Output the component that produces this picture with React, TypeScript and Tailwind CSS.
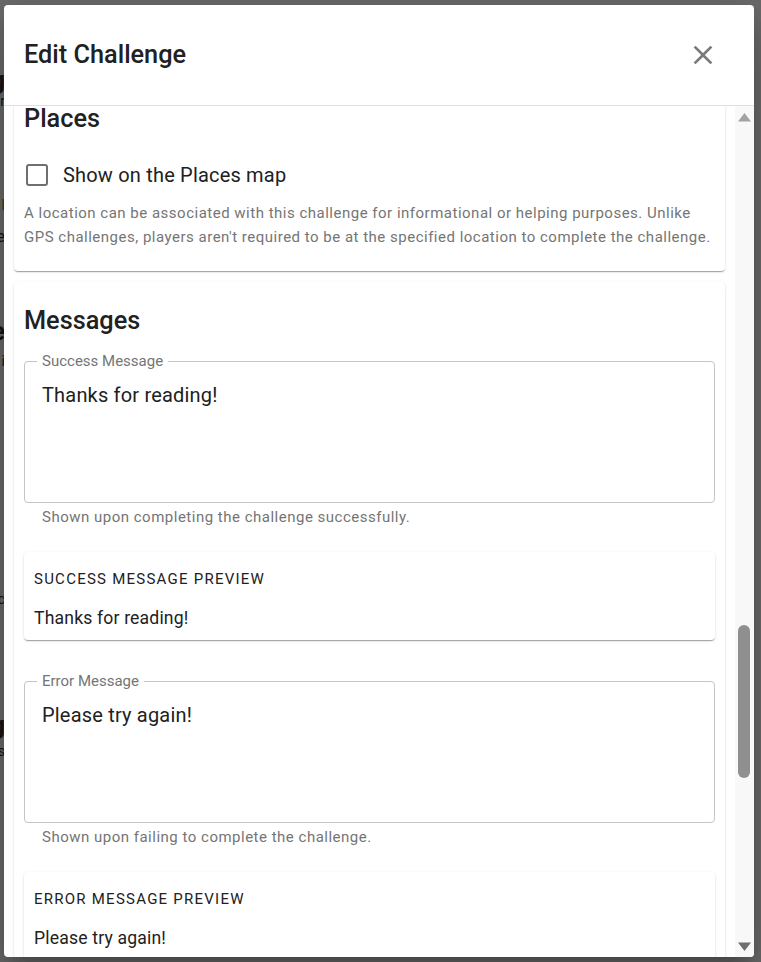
const cardShadow =
  "shadow-[0_2px_1px_-1px_rgba(0,0,0,0.2),0_1px_1px_0_rgba(0,0,0,0.14),0_1px_3px_0_rgba(0,0,0,0.12)]";

function CloseIcon() {
  return (
    <svg width="32" height="32" viewBox="0 0 24 24" fill="#7a7a7a" aria-hidden="true">
      <path d="M19 6.41 17.59 5 12 10.59 6.41 5 5 6.41 10.59 12 5 17.59 6.41 19 12 13.41 17.59 19 19 17.59 13.41 12z" />
    </svg>
  );
}

interface MessageFieldProps {
  label: string;
  value: string;
  helper: string;
  previewTitle: string;
}

function MessageField({ label, value, helper, previewTitle }: MessageFieldProps) {
  return (
    <div className="flex flex-col">
      <div className="relative h-[142px] rounded-[4px] border border-[#c4c4c4] px-[17px] pt-[19px]">
        <span className="absolute left-[12px] top-[-11px] bg-white px-[5px] text-[15px] leading-[20px] text-[#757575]">
          {label}
        </span>
        <p className="text-[20px] leading-[28px] tracking-[0.00938em] text-[#212121]">{value}</p>
      </div>
      <p className="ml-[18px] mt-[4px] text-[15px] leading-[20px] tracking-[0.03333em] text-[#757575]">
        {helper}
      </p>
      <div className={`mt-[25px] rounded-[4px] bg-white px-[10px] pb-[10px] pt-[17px] ${cardShadow}`}>
        <p className="text-[15px] uppercase leading-[20px] tracking-[0.083em] text-[#212121]">{previewTitle}</p>
        <p className="mt-[17px] text-[17.6px] leading-[24px] tracking-[0.00938em] text-[#212121]">{value}</p>
      </div>
    </div>
  );
}

function Scrollbar() {
  return (
    <div className="flex w-[19px] flex-col items-center bg-[#f8f8f8]">
      <svg width="13" height="9" viewBox="0 0 13 9" className="mt-[7px]" aria-hidden="true">
        <path d="M6.5 0 13 8.5H0z" fill="#a3a3a3" />
      </svg>
      <div className="w-full flex-1 px-[3px] pt-[503px]">
        <div className="h-[153px] w-[12px] rounded-full bg-[#8f8f8f]" />
      </div>
      <svg width="13" height="9" viewBox="0 0 13 9" className="mb-[6px]" aria-hidden="true">
        <path d="M0 0.5h13L6.5 9z" fill="#6f6f6f" />
      </svg>
    </div>
  );
}

export default function App() {
  return (
    <div className="relative h-[962px] w-[761px] overflow-hidden bg-[#6b6b6b] font-['Roboto',sans-serif]">
      {/* bits of the page peeking out from behind the dialog */}
      <div className="absolute left-[-40px] top-0 flex w-[45px] flex-col items-end text-[#161616]">
        <span className="mt-[66px] text-[26px] font-bold leading-[28px]">ng</span>
        <span className="text-[14px] leading-[14px]">r</span>
        <span className="mt-[85px] text-[14px] leading-[24px] text-[#3a3a10]">l</span>
        <span className="mt-[8px] text-[16px] leading-[24px]">e</span>
        <span className="mt-[66px] text-[26px] font-bold leading-[32px]">e</span>
        <span className="text-[14px] leading-[28px]">i</span>
        <span className="mt-[212px] text-[14px] leading-[24px]">c</span>
        <span className="mt-[98px] text-[26px] font-bold leading-[32px]">g</span>
        <span className="text-[14px] leading-[20px]">s</span>
      </div>

      <div className="relative ml-[4px] mt-[5px] flex h-[952px] w-[750px] flex-col overflow-hidden rounded-[4px] bg-white shadow-[0_11px_15px_-7px_rgba(0,0,0,0.2),0_24px_38px_3px_rgba(0,0,0,0.14),0_9px_46px_8px_rgba(0,0,0,0.12)]">
        <div className="flex h-[101px] shrink-0 items-center justify-between border-b border-[#e0e0e0] pl-[20px] pr-[35px]">
          <h1 className="text-[25.3px] font-medium leading-[32px] text-[#212121]">Edit Challenge</h1>
          <CloseIcon />
        </div>

        <div className="flex min-h-0 flex-1">
          <div className="min-w-0 flex-1 overflow-hidden px-[10px]">
            <div className={`mt-[-26px] rounded-[4px] bg-white px-[10px] pb-[22px] pt-[23px] ${cardShadow}`}>
              <h2 className="text-[25.3px] font-medium leading-[32px] text-[#212121]">Places</h2>
              <label className="mt-[19px] flex h-[42px] items-center">
                <span className="ml-[2px] h-[22px] w-[22px] rounded-[3px] border-[2.5px] border-[#6f6f6f]" />
                <span className="ml-[15px] text-[20px] leading-[28px] tracking-[0.00938em] text-[#212121]">
                  Show on the Places map
                </span>
              </label>
              <p className="mt-[5px] text-[15px] leading-[24px] tracking-[0.03333em] text-[#757575]">
                A location can be associated with this challenge for informational or helping purposes. Unlike GPS
                challenges, players aren't required to be at the specified location to complete the challenge.
              </p>
            </div>

            <div className={`mt-[11px] rounded-[4px] bg-white px-[10px] pb-[10px] pt-[23px] ${cardShadow}`}>
              <h2 className="text-[25.3px] font-medium leading-[32px] text-[#212121]">Messages</h2>
              <div className="mt-[24px]">
                <MessageField
                  label="Success Message"
                  value="Thanks for reading!"
                  helper="Shown upon completing the challenge successfully."
                  previewTitle="Success message preview"
                />
              </div>
              <div className="mt-[41px]">
                <MessageField
                  label="Error Message"
                  value="Please try again!"
                  helper="Shown upon failing to complete the challenge."
                  previewTitle="Error message preview"
                />
              </div>
            </div>
          </div>
          <Scrollbar />
        </div>
      </div>
    </div>
  );
}
